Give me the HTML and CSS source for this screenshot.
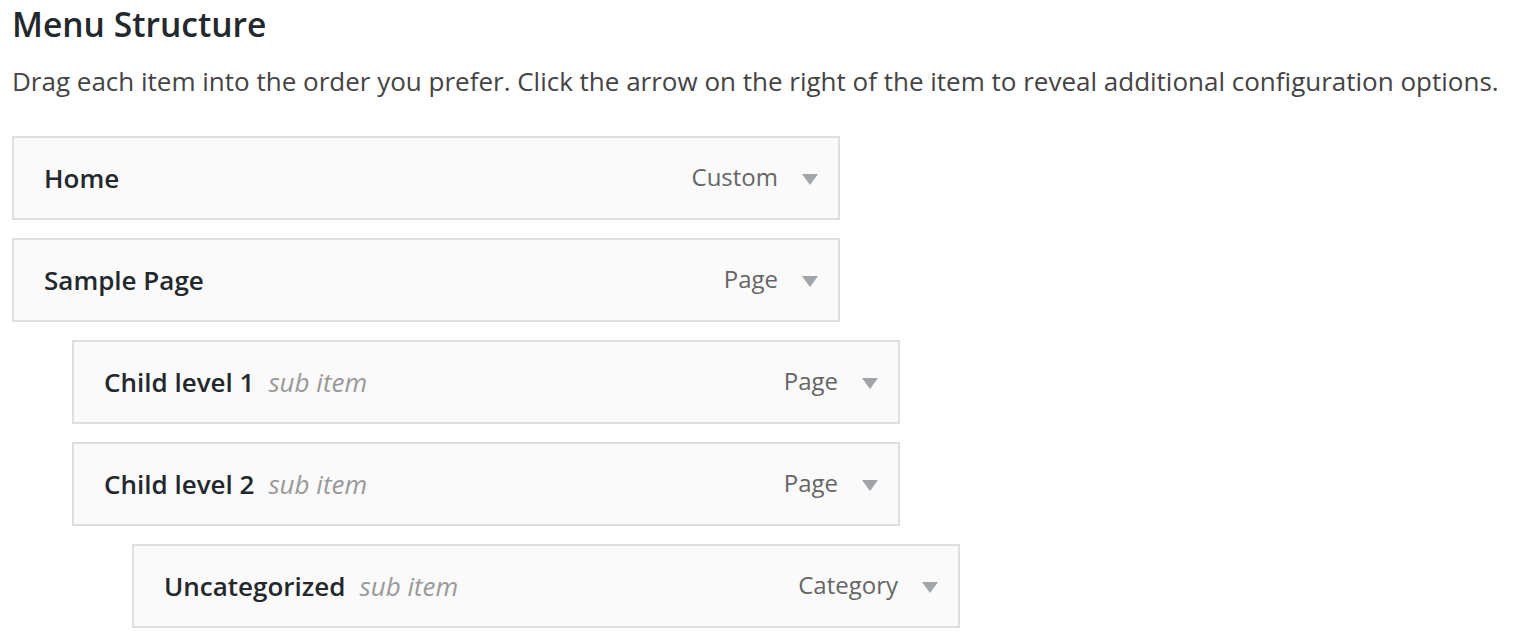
FILE: index.html
```html
<!DOCTYPE html>
<html lang="en">
<head>
<meta charset="utf-8">
<title>Menu Structure</title>
<link rel="stylesheet" href="styles.css">
</head>
<body>
<div class="page">
  <h2 class="heading">Menu Structure</h2>
  <p class="desc">Drag each item into the order you prefer. Click the arrow on the right of the item to reveal additional configuration options.</p>
  <ul class="menu">
    <li class="item depth-0">
      <div class="bar">
        <span class="title">Home</span>
        <span class="type">Custom</span>
        <span class="arrow"></span>
      </div>
    </li>
    <li class="item depth-0">
      <div class="bar">
        <span class="title">Sample Page</span>
        <span class="type">Page</span>
        <span class="arrow"></span>
      </div>
    </li>
    <li class="item depth-1">
      <div class="bar">
        <span class="title">Child level 1</span><span class="sub">sub item</span>
        <span class="type">Page</span>
        <span class="arrow"></span>
      </div>
    </li>
    <li class="item depth-1">
      <div class="bar">
        <span class="title">Child level 2</span><span class="sub">sub item</span>
        <span class="type">Page</span>
        <span class="arrow"></span>
      </div>
    </li>
    <li class="item depth-2">
      <div class="bar">
        <span class="title">Uncategorized</span><span class="sub">sub item</span>
        <span class="type">Category</span>
        <span class="arrow"></span>
      </div>
    </li>
  </ul>
</div>
</body>
</html>
```
FILE: styles.css
```css
html, body {
  margin: 0;
  padding: 0;
  background: #ffffff;
}
body {
  font-family: "Open Sans", "Noto Sans", sans-serif;
  color: #444444;
}
.page {
  padding: 2px 12px 0 12px;
}
.heading {
  margin: 0;
  font-size: 33.6px;
  line-height: 44px;
  font-weight: 600;
  color: #23282d;
}
.desc {
  margin: 16px 0 0 0;
  font-size: 26px;
  line-height: 39px;
  color: #444444;
}
.menu {
  list-style: none;
  margin: 35px 0 0 0;
  padding: 0;
  display: flex;
  flex-direction: column;
  gap: 18px;
}
.item.depth-1 { padding-left: 60px; }
.item.depth-2 { padding-left: 120px; }
.bar {
  box-sizing: border-box;
  width: 828px;
  height: 84px;
  border: 2px solid #dfdfdf;
  background: #fafafa;
  display: flex;
  align-items: center;
  padding: 0 20px 0 30px;
}
.title {
  font-size: 26px;
  font-weight: 600;
  color: #23282d;
}
.sub {
  font-size: 26px;
  font-style: italic;
  color: #999999;
  margin-left: 14px;
}
.type {
  margin-left: auto;
  font-size: 24px;
  color: #666666;
  padding-bottom: 3px;
}
.arrow {
  margin-left: 24px;
  width: 0;
  height: 0;
  border-left: 8px solid transparent;
  border-right: 8px solid transparent;
  border-top: 11px solid #a0a5aa;
  margin-top: 2px;
}
```
